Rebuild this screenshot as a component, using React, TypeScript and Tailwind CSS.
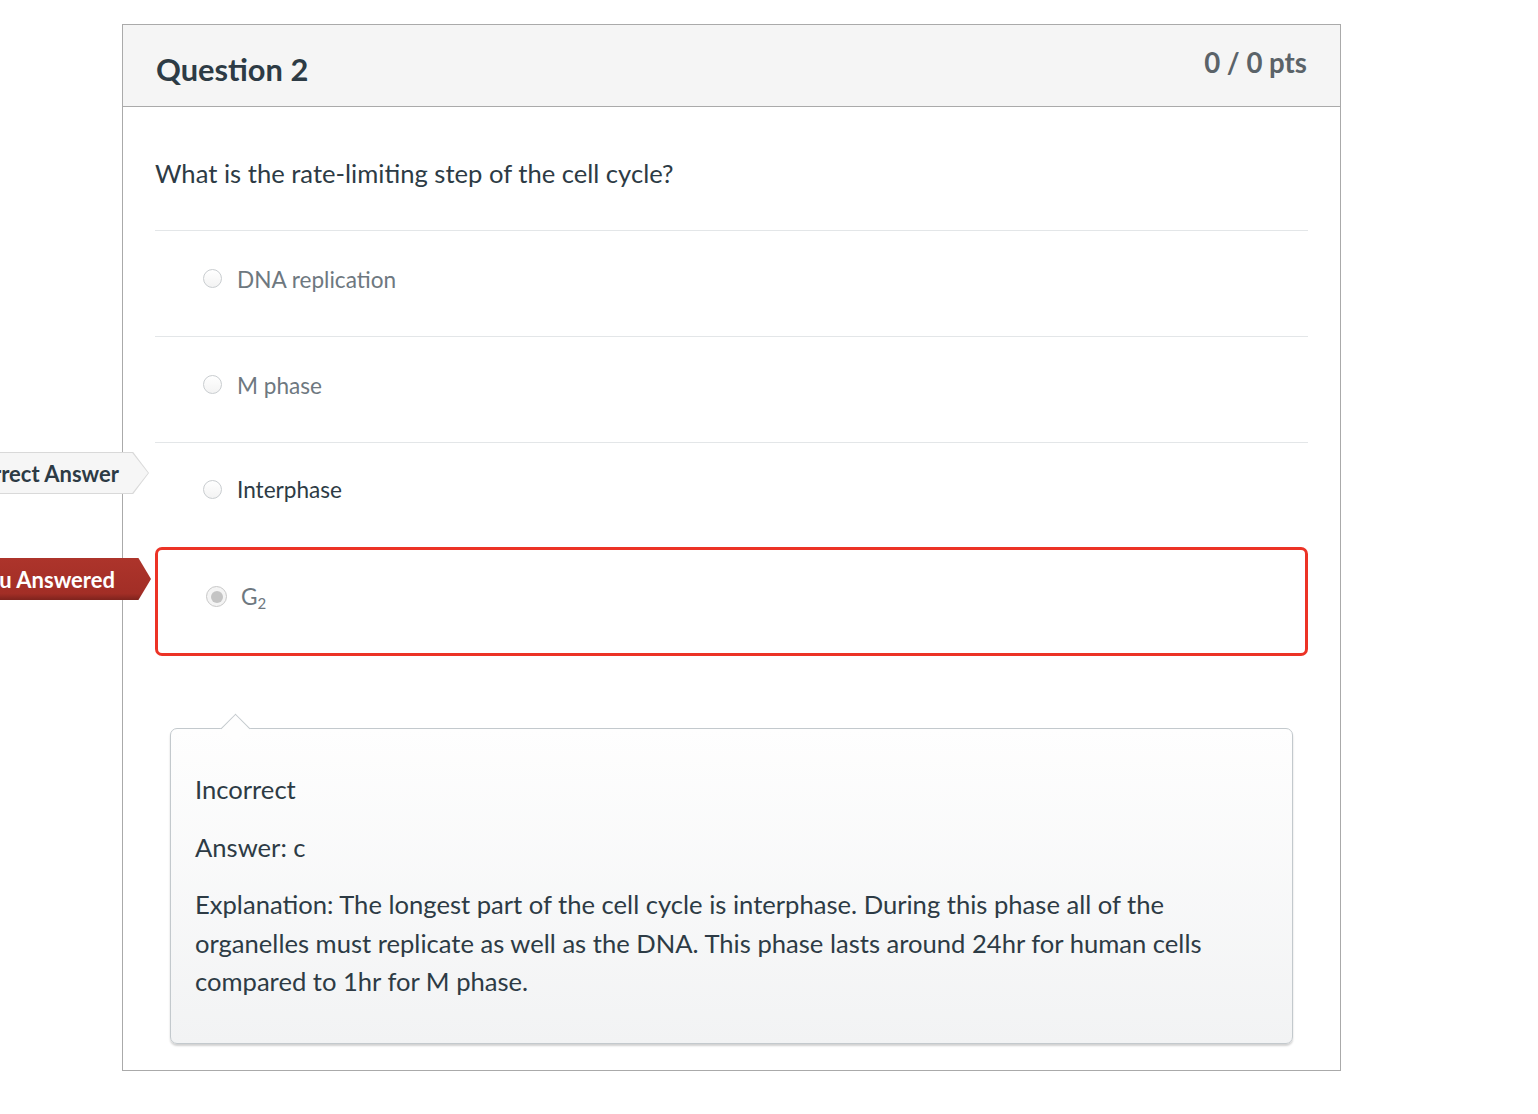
import React from "react";

function Radio({ checked = false }: { checked?: boolean }) {
  return (
    <span className="relative inline-flex h-[19px] w-[19px] shrink-0 items-center justify-center rounded-full border border-[#c9cdd0] bg-[linear-gradient(#ffffff,#f3f3f3)]">
      {checked && <span className="h-[11px] w-[11px] rounded-full bg-[#c8c8c8]" />}
    </span>
  );
}

function AnswerRow({
  label,
  dark = false,
}: {
  label: React.ReactNode;
  dark?: boolean;
}) {
  return (
    <div className="flex h-[106px] items-center border-t border-[#e3e6e8] pl-[48px]">
      <div className="-mt-[10px] flex items-center gap-[15px]">
        <Radio />
        <span
          className={
            dark
              ? "mt-[2px] text-[22.6px] text-[#2d3b45]"
              : "mt-[2px] text-[22.6px] text-[#6e7880]"
          }
        >
          {label}
        </span>
      </div>
    </div>
  );
}

export default function App() {
  return (
    <div
      className="min-h-[1114px] w-full overflow-hidden bg-white pt-[24px]"
      style={{ fontFamily: "Lato, 'Open Sans', sans-serif" }}
    >
      <div className="ml-[122px] w-[1219px] border border-[#aaaaaa] bg-white">
        {/* header */}
        <div className="flex h-[82px] justify-between border-b border-[#aaaaaa] bg-[#f5f5f5] px-[33px]">
          <h2 className="mt-[27px] text-[30.8px] leading-[36px] font-bold text-[#2d3b45]">
            Question 2
          </h2>
          <div className="mt-[22px] text-[27.6px] leading-[32px] font-bold text-[#5b6369]">
            0 / 0 pts
          </div>
        </div>

        {/* body */}
        <div className="px-[32px] pb-[26px]">
          <p className="mt-[47px] mb-[38px] text-[25.6px] leading-[38px] text-[#2d3b45]">
            What is the rate-limiting step of the cell cycle?
          </p>

          <div className="relative">
            <AnswerRow label="DNA replication" />
            <AnswerRow label="M phase" />
            <div className="relative">
              <div className="absolute top-[10px] -left-[232px] h-[42px] w-[226px] bg-[#d9d9d9] [clip-path:polygon(0_0,93%_0,100%_50%,93%_100%,0_100%)]">
                <div className="absolute inset-[1px] flex items-center justify-end bg-[#f6f6f6] pr-[29px] text-[22px] font-bold text-[#2d3b45] [clip-path:polygon(0_0,93%_0,100%_50%,93%_100%,0_100%)]">
                  Correct Answer
                </div>
              </div>
              <div className="flex h-[105px] items-center border-t border-[#e3e6e8] pl-[48px]">
                <div className="-mt-[11px] flex items-center gap-[15px]">
                  <Radio />
                  <span className="text-[22.6px] text-[#2d3b45]">Interphase</span>
                </div>
              </div>
            </div>

            <div className="relative">
              <div className="absolute top-[11px] -left-[232px] flex h-[42px] w-[228px] items-center justify-end bg-[linear-gradient(#ad342b,#a22e26_85%,#7e231d)] pr-[36px] text-[22px] font-bold text-white [clip-path:polygon(0_0,94.5%_0,100%_50%,94.5%_100%,0_100%)]">
                You Answered
              </div>
              <div className="flex h-[109px] items-center rounded-[7px] border-[3px] border-[#ec3326] pl-[48px]">
                <div className="-mt-[9px] flex items-center gap-[14px]">
                  <span className="relative inline-flex h-[21px] w-[21px] shrink-0 items-center justify-center rounded-full border border-[#c8c8c8] bg-[#f4f4f4]">
                    <span className="h-[12px] w-[12px] rounded-full bg-[#c4c4c4]" />
                  </span>
                  <span className="text-[22.6px] text-[#6e7880]">
                    G<sub className="text-[15px]">2</sub>
                  </span>
                </div>
              </div>
            </div>
          </div>

          {/* feedback callout */}
          <div className="relative mx-[15px] mt-[72px] rounded-[7px] border border-[#c3c9cd] bg-[linear-gradient(#fefefe,#f2f3f4)] px-[24px] pt-[41px] pb-[42px] shadow-[0_2px_2px_rgba(0,0,0,0.18)]">
            <div className="absolute -top-[11px] left-[54px] h-[21px] w-[21px] rotate-45 border-t border-l border-[#c3c9cd] bg-[#fefefe]" />
            <div className="relative text-[25.6px] leading-[38.5px] text-[#2d3b45]">
              <p>Incorrect</p>
              <p className="mt-[19px]">Answer: c</p>
              <p className="mt-[19px]">
                Explanation: The longest part of the cell cycle is interphase. During this
                phase all of the organelles must replicate as well as the DNA. This phase
                lasts around 24hr for human cells compared to 1hr for M phase.
              </p>
            </div>
          </div>
        </div>
      </div>
    </div>
  );
}
